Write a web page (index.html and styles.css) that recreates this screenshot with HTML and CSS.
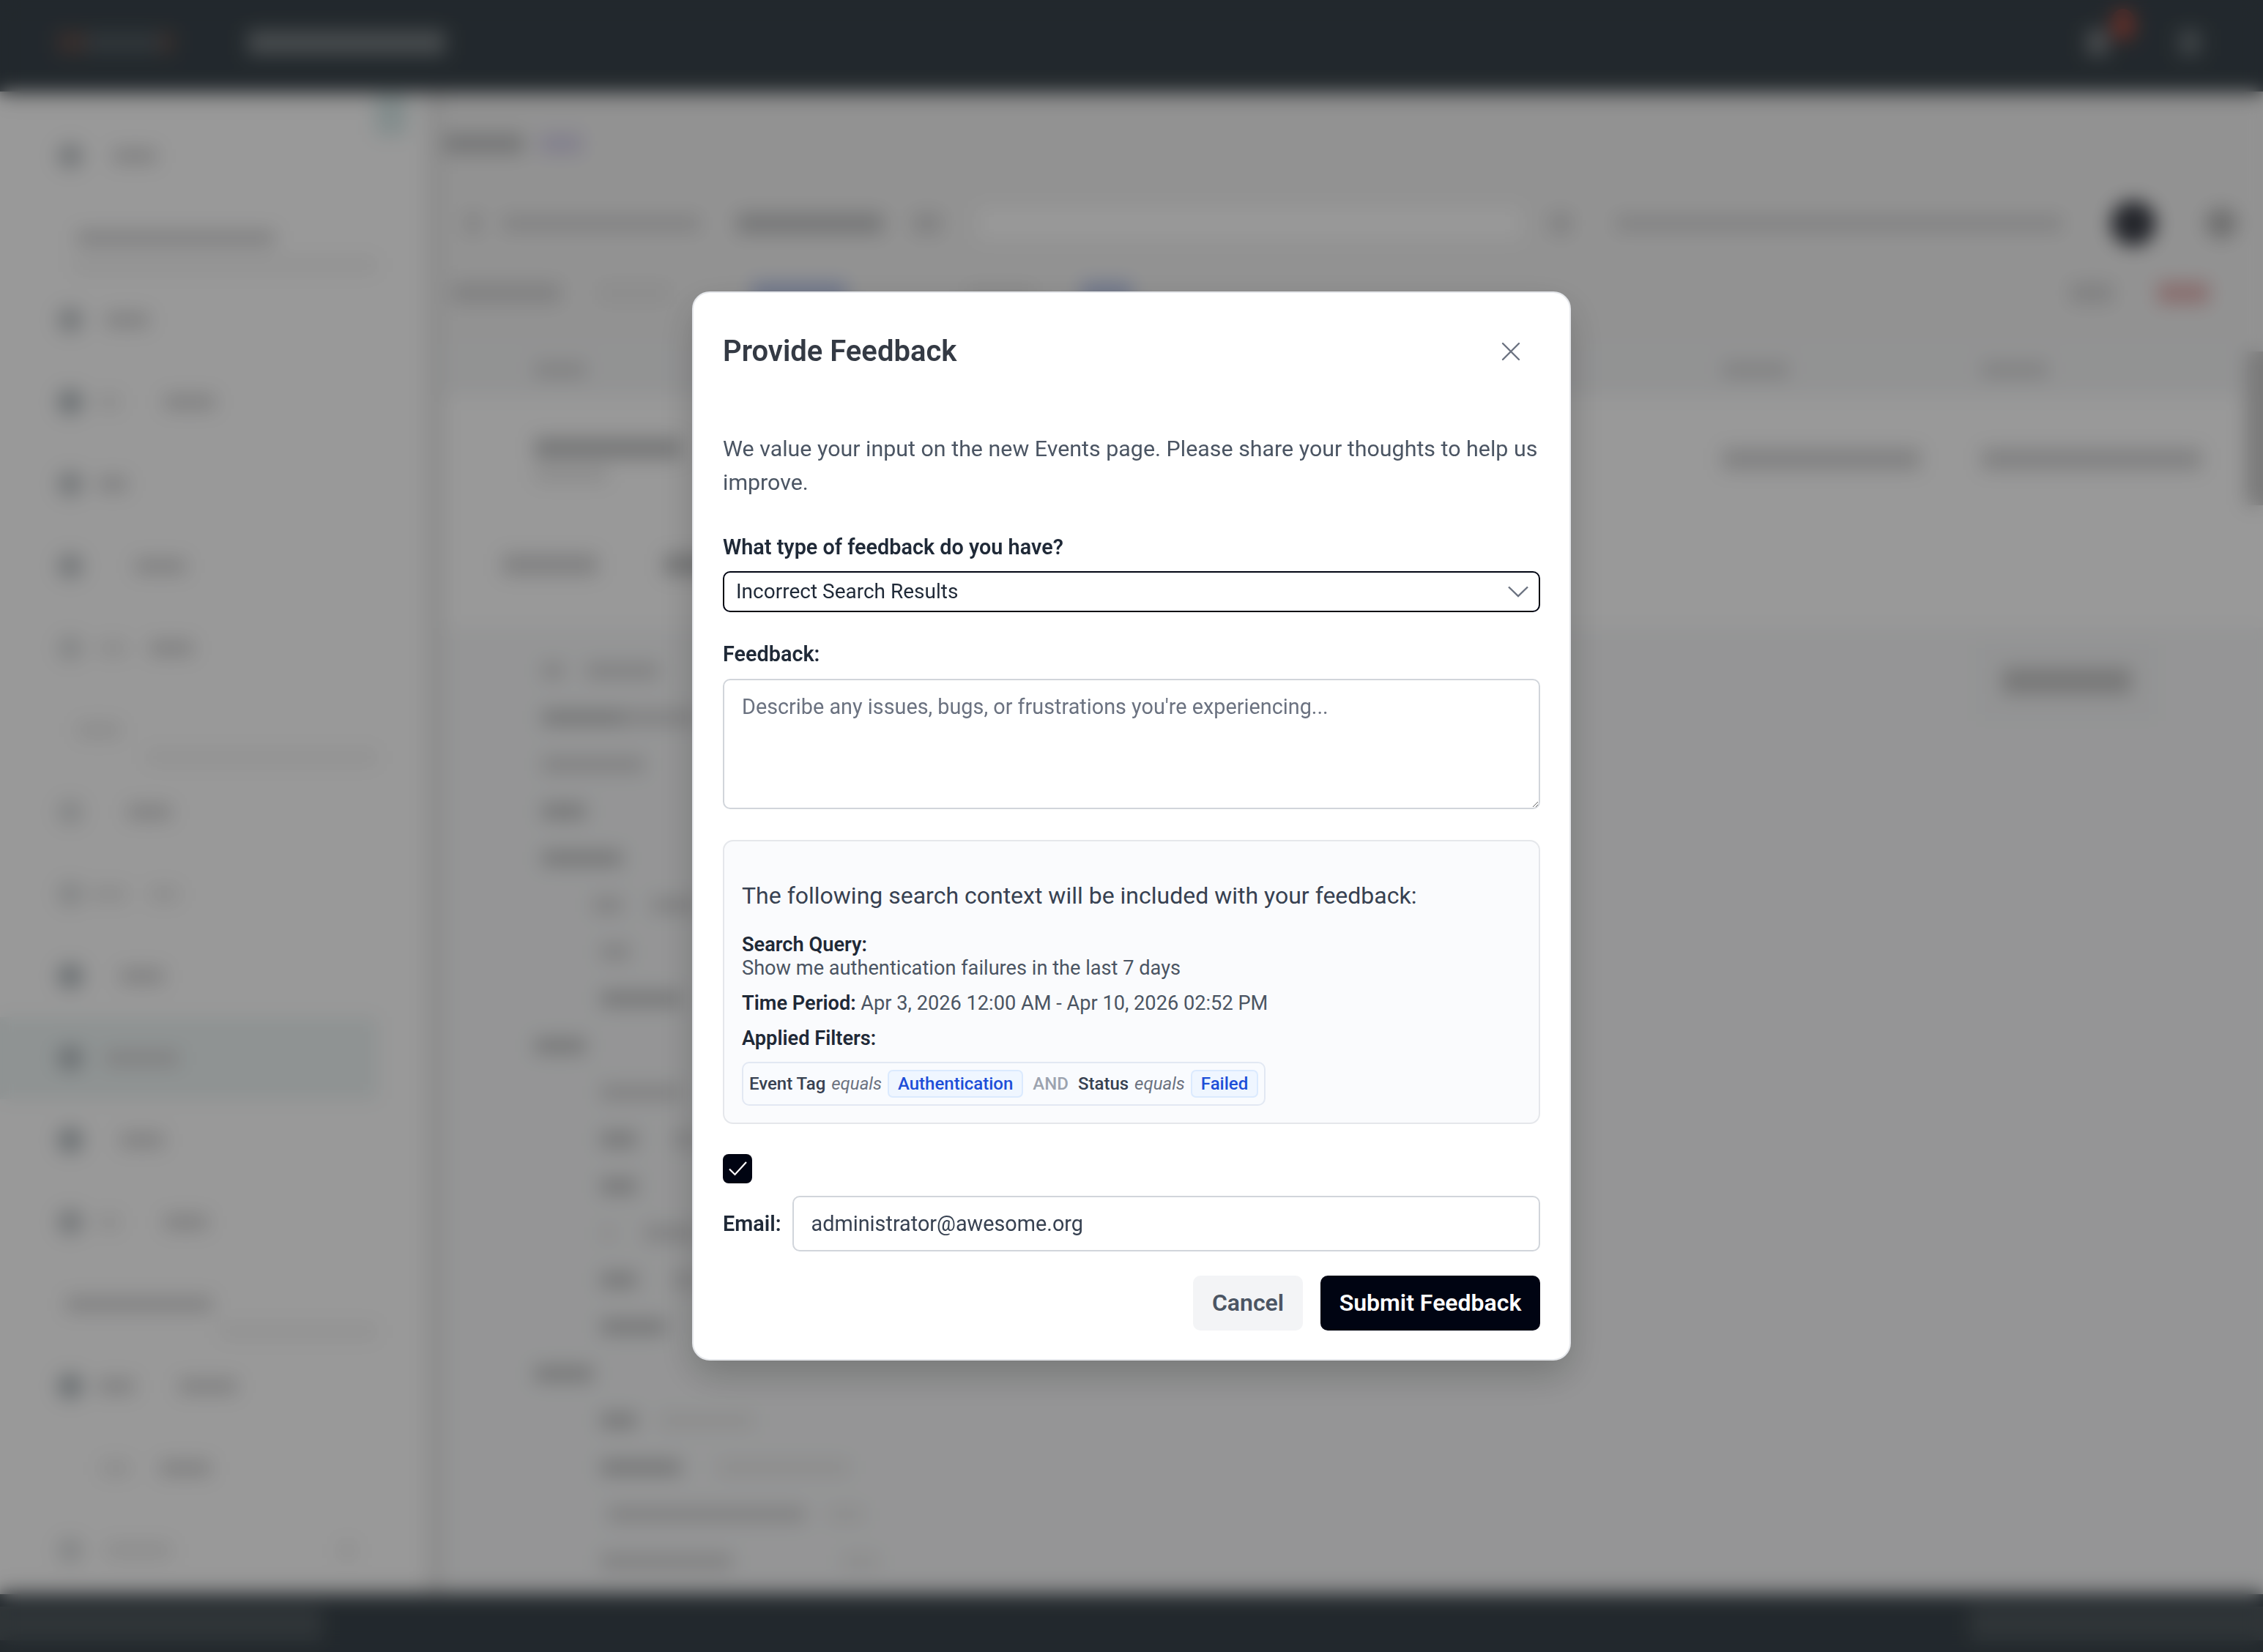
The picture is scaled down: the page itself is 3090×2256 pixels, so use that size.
FILE: index.html
```html
<!DOCTYPE html>
<html>
<head>
    <title>Events</title>
    <link rel="stylesheet" href="styles.css">
</head>
<body>
    <!-- page behind the dialog, only ever seen through the blur -->
    <div class="app" aria-hidden="true">
        <header class="topbar">
            <i class="sk tall w40 logo-red"></i><i class="sk tall w100 logo-grey"></i><i class="sk tall w20 logo-red"></i>
            <i class="sk gap w100"></i>
            <i class="sk brand w270"></i>
            <i class="sk bell"></i>
            <i class="badge"></i>
            <i class="sk user"></i>
        </header>
        <div class="middle">
            <nav class="sidebar">
                <i class="collapse"></i>
                <div class="nav-row"><i class="sk ic"></i><i class="sk gap w40"></i><i class="sk w60"></i></div>
                <div class="nav-row section"><i class="sk w270"></i></div>
                <div class="nav-row"><i class="sk ic"></i><i class="sk gap w30"></i><i class="sk w60"></i></div>
                <div class="nav-row"><i class="sk ic dark"></i><i class="sk gap w20"></i><i class="sk faint w30"></i><i class="sk gap w60"></i><i class="sk w70"></i></div>
                <div class="nav-row"><i class="sk ic"></i><i class="sk gap w20"></i><i class="sk w40"></i></div>
                <div class="nav-row"><i class="sk ic"></i><i class="sk gap w70"></i><i class="sk w70"></i></div>
                <div class="nav-row"><i class="sk ic faint"></i><i class="sk gap w20"></i><i class="sk faint w40"></i><i class="sk gap w30"></i><i class="sk w60"></i></div>
                <div class="nav-row section short"><i class="sk faint w60"></i></div>
                <div class="nav-row"><i class="sk ic faint"></i><i class="sk gap w60"></i><i class="sk w60"></i></div>
                <div class="nav-row"><i class="sk ic faint"></i><i class="sk gap w10"></i><i class="sk faint w50"></i><i class="sk gap w30"></i><i class="sk faint w40"></i></div>
                <div class="nav-row"><i class="sk ic dark"></i><i class="sk gap w50"></i><i class="sk w60"></i></div>
                <div class="nav-row active"><i class="sk ic dark"></i><i class="sk gap w30"></i><i class="sk w100"></i></div>
                <div class="nav-row"><i class="sk ic dark"></i><i class="sk gap w50"></i><i class="sk w60"></i></div>
                <div class="nav-row"><i class="sk ic"></i><i class="sk gap w20"></i><i class="sk faint w30"></i><i class="sk gap w60"></i><i class="sk w60"></i></div>
                <div class="nav-row section wide"><i class="sk w200"></i></div>
                <div class="nav-row"><i class="sk ic dark"></i><i class="sk gap w20"></i><i class="sk w50"></i><i class="sk gap w60"></i><i class="sk w80"></i></div>
                <div class="nav-row"><i class="sk gap w60"></i><i class="sk faint w40"></i><i class="sk gap w40"></i><i class="sk w70"></i></div>
                <div class="nav-row"><i class="sk ic faint"></i><i class="sk gap w30"></i><i class="sk faint w90"></i><i class="sk gap w230"></i><i class="sk faint w20"></i></div>
            </nav>
            <main class="content">
                <div class="band">
                    <div class="mrow title-row"><i class="sk tall dark w110"></i><i class="sk gap w20"></i><i class="sk tall purple w60"></i></div>
                    <div class="mrow search-row">
                        <i class="sk tall w20"></i><i class="sk gap w30"></i><i class="sk w270"></i><i class="sk gap w50"></i><i class="sk tall dark w200"></i><i class="sk gap w40"></i><i class="sk tall w40"></i><i class="sk gap w50"></i>
                        <i class="search-input"></i>
                        <i class="sk gap w40"></i><i class="sk tall w30"></i><i class="sk gap w60"></i><i class="sk w610"></i><i class="sk gap w60"></i>
                        <i class="run-btn"></i><i class="more-btn"></i>
                    </div>
                    <div class="mrow filter-row">
                        <i class="sk gap w10"></i><i class="sk tall w150"></i><i class="sk gap w50"></i><i class="sk tall faint w100"></i><i class="sk gap w110"></i><i class="sk tall blue w130"></i><i class="sk gap w160"></i><i class="sk tall faint w100"></i><i class="sk gap w60"></i><i class="sk tall blue w70"></i>
                        <i class="sk gap w1280"></i><i class="sk tall w60"></i><i class="sk gap w60"></i><i class="sk tall pink w70"></i>
                    </div>
                </div>
                <div class="table">
                    <div class="tbl-row tbl-head"><i class="sk w70"></i><span></span><i class="sk w90"></i><i class="sk w90"></i></div>
                    <div class="tbl-row tbl-body">
                        <div class="cell-stack"><i class="sk tall dark w200"></i><i class="sk faint w100"></i></div>
                        <span></span>
                        <i class="sk tall lower w270"></i>
                        <i class="sk tall lower w300"></i>
                    </div>
                    <div class="mrow tabs"><i class="sk gap w80"></i><i class="sk tall w130"></i><i class="sk gap w90"></i><i class="sk tall dark w100"></i></div>
                </div>
                <div class="detail">
                    <div class="mrow line"><i class="sk gap w10"></i><i class="sk w30"></i><i class="sk gap w30"></i><i class="sk w100"></i><i class="detail-btn"></i></div>
                    <div class="mrow line"><i class="sk gap w10"></i><i class="sk dark w110"></i><i class="sk w100"></i></div>
                    <div class="mrow line"><i class="sk gap w10"></i><i class="sk w140"></i></div>
                    <div class="mrow line"><i class="sk gap w10"></i><i class="sk dark w60"></i></div>
                    <div class="mrow line"><i class="sk gap w10"></i><i class="sk dark w110"></i></div>
                    <div class="mrow line"><i class="sk gap w80"></i><i class="sk w40"></i><i class="sk gap w40"></i><i class="sk w60"></i></div>
                    <div class="mrow line"><i class="sk gap w90"></i><i class="sk w40"></i></div>
                    <div class="mrow line"><i class="sk gap w90"></i><i class="sk dark w110"></i></div>
                    <div class="mrow line"><i class="sk dark w70"></i></div>
                    <div class="mrow line"><i class="sk gap w90"></i><i class="sk w110"></i></div>
                    <div class="mrow line"><i class="sk gap w90"></i><i class="sk dark w50"></i><i class="sk gap w50"></i><i class="sk w30"></i></div>
                    <div class="mrow line"><i class="sk gap w90"></i><i class="sk dark w50"></i></div>
                    <div class="mrow line"><i class="sk gap w90"></i><i class="sk faint w20"></i><i class="sk gap w40"></i><i class="sk w70"></i></div>
                    <div class="mrow line"><i class="sk gap w90"></i><i class="sk dark w50"></i><i class="sk gap w50"></i><i class="sk w30"></i></div>
                    <div class="mrow line"><i class="sk gap w90"></i><i class="sk dark w90"></i></div>
                    <div class="mrow line"><i class="sk dark w80"></i></div>
                    <div class="mrow line"><i class="sk gap w90"></i><i class="sk dark w50"></i><i class="sk gap w30"></i><i class="sk faint w130"></i></div>
                    <div class="mrow line"><i class="sk gap w90"></i><i class="sk dark w110"></i><i class="sk gap w50"></i><i class="sk faint w180"></i></div>
                    <div class="mrow line"><i class="sk gap w100"></i><i class="sk w270"></i><i class="sk gap w30"></i><i class="sk faint w50"></i></div>
                    <div class="mrow line"><i class="sk gap w90"></i><i class="sk w180"></i><i class="sk gap w150"></i><i class="sk faint w50"></i></div>
                </div>
                <i class="scroll-thumb"></i>
            </main>
        </div>
        <footer class="bottombar"><i class="sk foot w440"></i><i class="sk foot w400"></i></footer>
    </div>

    <div class="overlay">
        <form class="modal">
            <div class="modal-head">
                <h2>Provide Feedback</h2>
                <button type="button" class="close" aria-label="Close">
                    <svg viewBox="0 0 26 26" width="26" height="26" fill="none" stroke="#6b7280" stroke-width="2.4" stroke-linecap="round"><path d="M2 2 24 24M24 2 2 24"/></svg>
                </button>
            </div>
            <p class="intro">We value your input on the new Events page. Please share your thoughts to help us improve.</p>

            <label class="field-label type-label" for="feedbackType">What type of feedback do you have?</label>
            <div class="select-wrap">
                <select id="feedbackType">
                    <option>Incorrect Search Results</option>
                </select>
                <svg class="chevron" viewBox="0 0 28 16" width="28" height="16" fill="none" stroke="#6b7280" stroke-width="2.4"><path d="M1 1.5 14 14 27 1.5"/></svg>
            </div>

            <label class="field-label feedback-label" for="feedbackText">Feedback:</label>
            <textarea id="feedbackText" placeholder="Describe any issues, bugs, or frustrations you're experiencing..."></textarea>

            <div class="context">
                <p class="context-title">The following search context will be included with your feedback:</p>
                <div class="context-item query">
                    <strong>Search Query:</strong>
                    <div>Show me authentication failures in the last 7 days</div>
                </div>
                <div class="context-item"><strong>Time Period:</strong> Apr 3, 2026 12:00 AM - Apr 10, 2026 02:52 PM</div>
                <div class="context-item"><strong>Applied Filters:</strong></div>
                <div class="filters">
                    <span class="filter-key">Event Tag</span>
                    <em>equals</em>
                    <span class="chip">Authentication</span>
                    <span class="and">AND</span>
                    <span class="filter-key">Status</span>
                    <em>equals</em>
                    <span class="chip">Failed</span>
                </div>
            </div>

            <span class="check">
                <svg viewBox="0 0 40 40" width="40" height="40" fill="none" stroke="#fff" stroke-width="2.2"><path d="M9 20.5 16.5 28 32 11"/></svg>
            </span>

            <div class="email-row">
                <label for="feedbackEmail">Email:</label>
                <input type="email" id="feedbackEmail" value="administrator@awesome.org">
            </div>

            <div class="actions">
                <button type="button" class="btn-cancel">Cancel</button>
                <button type="submit" class="btn-submit">Submit Feedback</button>
            </div>
        </form>
    </div>
</body>
</html>
```

FILE: styles.css
```css
* {
    box-sizing: border-box;
}
html, body {
    margin: 0;
    padding: 0;
    width: 3090px;
    height: 2256px;
    overflow: hidden;
    background: #fff;
    font-family: Roboto, "Liberation Sans", sans-serif;
}

/* background page */
.app {
    display: flex;
    flex-direction: column;
    height: 2256px;
}
.topbar {
    flex: none;
    position: relative;
    z-index: 1;
    height: 125px;
    display: flex;
    align-items: center;
    padding: 0 85px 10px 78px;
    background: #3a444b;
    box-shadow: 0 6px 16px rgba(0, 0, 0, 0.2);
}
.middle {
    flex: 1;
    display: flex;
    min-height: 0;
}
.bottombar {
    flex: none;
    position: relative;
    z-index: 1;
    height: 79px;
    display: flex;
    align-items: center;
    justify-content: space-between;
    background: #3a444b;
    box-shadow: 0 -6px 16px rgba(0, 0, 0, 0.15);
}
.sidebar {
    position: relative;
    flex: none;
    width: 582px;
    padding-top: 32px;
    background: #fff;
}
.nav-row {
    height: 112px;
    display: flex;
    align-items: center;
    padding-left: 78px;
}
.nav-row.active {
    width: 515px;
    background: #eef5f5;
}
.nav-row.section {
    position: relative;
    padding-left: 105px;
}
.nav-row.section::after {
    content: "";
    position: absolute;
    left: 100px;
    right: 67px;
    top: 82px;
    height: 22px;
    background: #f4f4f4;
}
.nav-row.section.short::after {
    left: 200px;
}
.nav-row.section.wide {
    padding-left: 90px;
}
.nav-row.section.wide::after {
    left: 300px;
}
.collapse {
    position: absolute;
    left: 512px;
    top: 4px;
    width: 44px;
    height: 56px;
    background: #dcecec;
}
.content {
    position: relative;
    flex: 1;
    min-width: 0;
    overflow: hidden;
    border-left: 24px solid #ebebeb;
    background: #f8f9fa;
}
.band {
    height: 345px;
    padding-top: 51px;
    background: #f4f4f4;
}
.mrow {
    display: flex;
    align-items: center;
}
.title-row {
    height: 40px;
}
.search-row {
    height: 60px;
    margin-top: 59px;
    padding-left: 30px;
}
.filter-row {
    height: 40px;
    margin-top: 45px;
}
.search-input {
    flex: none;
    width: 740px;
    height: 42px;
    background: #ffffff;
}
.run-btn {
    flex: none;
    width: 62px;
    height: 62px;
    margin-left: 6px;
    border-radius: 50%;
    background: #3d4049;
}
.more-btn {
    flex: none;
    width: 44px;
    height: 44px;
    margin-left: 67px;
    border-radius: 50%;
    background: #bbbbbb;
}
.table {
    height: 387px;
    background: #fff;
}
.tbl-row {
    display: grid;
    grid-template-columns: 300px 1322px 354px 1fr;
    padding-left: 124px;
}
.tbl-head {
    height: 70px;
    align-items: center;
    background: #f4f5f6;
}
.tbl-body {
    height: 200px;
    align-items: start;
    padding-top: 57px;
}
.cell-stack {
    display: flex;
    flex-direction: column;
    gap: 10px;
}
.sk.lower {
    margin-top: 15px;
}
.tabs {
    height: 40px;
    margin-top: 11px;
}
.detail {
    padding: 27px 0 0 124px;
}
.line {
    height: 64px;
}
.detail-btn {
    flex: none;
    width: 176px;
    height: 36px;
    margin: 28px 180px 0 auto;
    background: #c9c9c9;
    box-shadow: 0 0 0 36px rgba(0, 0, 0, 0.012);
}
.scroll-thumb {
    position: absolute;
    right: 0;
    top: 355px;
    width: 24px;
    height: 210px;
    background: #cccccc;
}

/* skeleton bars, blurred text and icons */
.sk {
    display: block;
    flex: none;
    height: 22px;
    background: #d9d9da;
}
.sk.gap { background: none; }
.sk.tall { height: 30px; }
.sk.dark { background: #c8c9ca; }
.sk.faint { background: #ebebeb; }
.sk.blue { background: #bcc8ea; }
.sk.pink { background: #e4b8b8; }
.sk.purple { background: #dcd8ec; }
.sk.ic {
    width: 36px;
    height: 36px;
    border-radius: 50%;
    background: #c8cccf;
}
.sk.ic.dark { background: #b9c0c4; }
.sk.ic.faint { background: #e0e2e3; }
.sk.logo-red { background: #5f4f4c; }
.sk.logo-grey { background: #505a60; }
.sk.brand {
    height: 34px;
    background: #767d81;
}
.sk.bell {
    width: 30px;
    height: 36px;
    margin-left: auto;
    background: #7a7f83;
}
.sk.user {
    width: 30px;
    height: 36px;
    margin-left: 96px;
    background: #697176;
}
.badge {
    position: absolute;
    left: 2882px;
    top: 12px;
    width: 34px;
    height: 44px;
    border-radius: 50%;
    background: #a04e44;
}
.sk.foot {
    height: 46px;
    background: #50595e;
}
.w10 { width: 10px; }
.w20 { width: 20px; }
.w30 { width: 30px; }
.w40 { width: 40px; }
.w50 { width: 50px; }
.w60 { width: 60px; }
.w70 { width: 70px; }
.w80 { width: 80px; }
.w90 { width: 90px; }
.w100 { width: 100px; }
.w110 { width: 110px; }
.w130 { width: 130px; }
.w140 { width: 140px; }
.w150 { width: 150px; }
.w160 { width: 160px; }
.w180 { width: 180px; }
.w200 { width: 200px; }
.w230 { width: 230px; }
.w270 { width: 270px; }
.w300 { width: 300px; }
.w400 { width: 400px; }
.w440 { width: 440px; }
.w610 { width: 610px; }
.w1280 { width: 1280px; }

/* dialog */
.overlay {
    position: fixed;
    inset: 0;
    z-index: 10;
    display: flex;
    align-items: center;
    justify-content: center;
    background: rgba(0, 0, 0, 0.4);
    backdrop-filter: blur(13px);
}
.modal {
    width: 1200px;
    height: 1460px;
    display: flex;
    flex-direction: column;
    padding: 56px 40px 38px;
    background: #fff;
    border: 2px solid #e5e7eb;
    border-radius: 24px;
    box-shadow: 0 20px 50px rgba(0, 0, 0, 0.2);
}
.modal-head {
    display: flex;
    align-items: center;
    justify-content: space-between;
    height: 48px;
}
h2 {
    margin: 0;
    font-size: 40px;
    line-height: 48px;
    font-weight: 600;
    color: #343a44;
}
.close {
    display: flex;
    padding: 0;
    margin-right: 27px;
    border: none;
    background: none;
}
.intro {
    margin: 86px 0 0;
    font-size: 30.4px;
    line-height: 46px;
    color: #4b5563;
}
.field-label {
    display: block;
    font-size: 28.8px;
    line-height: 36px;
    font-weight: 600;
    color: #1f2937;
}
.type-label {
    margin-top: 47px;
}
.feedback-label {
    margin-top: 39px;
}
.select-wrap {
    position: relative;
    margin-top: 15px;
}
select {
    display: block;
    width: 100%;
    height: 56px;
    padding: 0 16px 2px;
    appearance: none;
    font-family: inherit;
    font-size: 28px;
    color: #1f2937;
    background: #fff;
    border: 2px solid #000412;
    border-radius: 10px;
}
.chevron {
    position: absolute;
    right: 16px;
    top: 20px;
}
textarea {
    display: block;
    width: 100%;
    height: 178px;
    margin-top: 16px;
    padding: 18px 24px;
    resize: vertical;
    font-family: inherit;
    font-size: 28.8px;
    line-height: 36px;
    color: #1f2937;
    border: 2px solid #d1d5db;
    border-radius: 10px;
    outline: none;
}
textarea::placeholder {
    color: #6b7280;
}
.context {
    height: 388px;
    margin-top: 42px;
    padding: 51px 24px 0;
    background: #fafbfd;
    border: 2px solid #e5e7eb;
    border-radius: 14px;
}
.context-title {
    margin: 0;
    font-size: 32px;
    line-height: 46px;
    color: #374151;
}
.context-item {
    margin-top: 16px;
    font-size: 27.2px;
    line-height: 32px;
    color: #4b5563;
}
.context-item.query {
    margin-top: 28px;
}
.context-item strong {
    font-weight: 600;
    color: #1f2937;
}
.filters {
    display: inline-flex;
    align-items: center;
    gap: 8px;
    height: 60px;
    margin-top: 16px;
    padding: 0 8px;
    font-size: 24px;
    background: #f9fbfe;
    border: 2px solid #e2e8f3;
    border-radius: 10px;
}
.filter-key {
    font-weight: 500;
    color: #374151;
}
.filters em {
    color: #6b7280;
}
.chip {
    display: flex;
    align-items: center;
    height: 38px;
    padding: 0 12px;
    font-weight: 500;
    color: #1d4ed8;
    background: #eff6ff;
    border: 2px solid #dbeafe;
    border-radius: 7px;
}
.and {
    margin: 0 5px;
    font-weight: 500;
    color: #9ca3af;
}
.check {
    display: block;
    flex: none;
    width: 40px;
    height: 40px;
    margin-top: 41px;
    background: #000412;
    border-radius: 8px;
}
.email-row {
    display: flex;
    align-items: center;
    gap: 15px;
    margin-top: 17px;
}
.email-row label {
    font-size: 28.8px;
    font-weight: 600;
    color: #1f2937;
}
.email-row input {
    flex: 1;
    height: 76px;
    padding: 0 24px;
    font-family: inherit;
    font-size: 28.8px;
    color: #374151;
    border: 2px solid #d1d5db;
    border-radius: 10px;
    outline: none;
}
.actions {
    display: flex;
    justify-content: flex-end;
    gap: 24px;
    margin-top: 33px;
}
.actions button {
    height: 75px;
    padding-bottom: 2px;
    font-family: inherit;
    font-size: 32px;
    font-weight: 600;
    border: none;
    border-radius: 10px;
}
.btn-cancel {
    width: 150px;
    color: #4b5563;
    background: #f3f4f6;
}
.btn-submit {
    width: 300px;
    color: #fff;
    background: #000412;
}
```
